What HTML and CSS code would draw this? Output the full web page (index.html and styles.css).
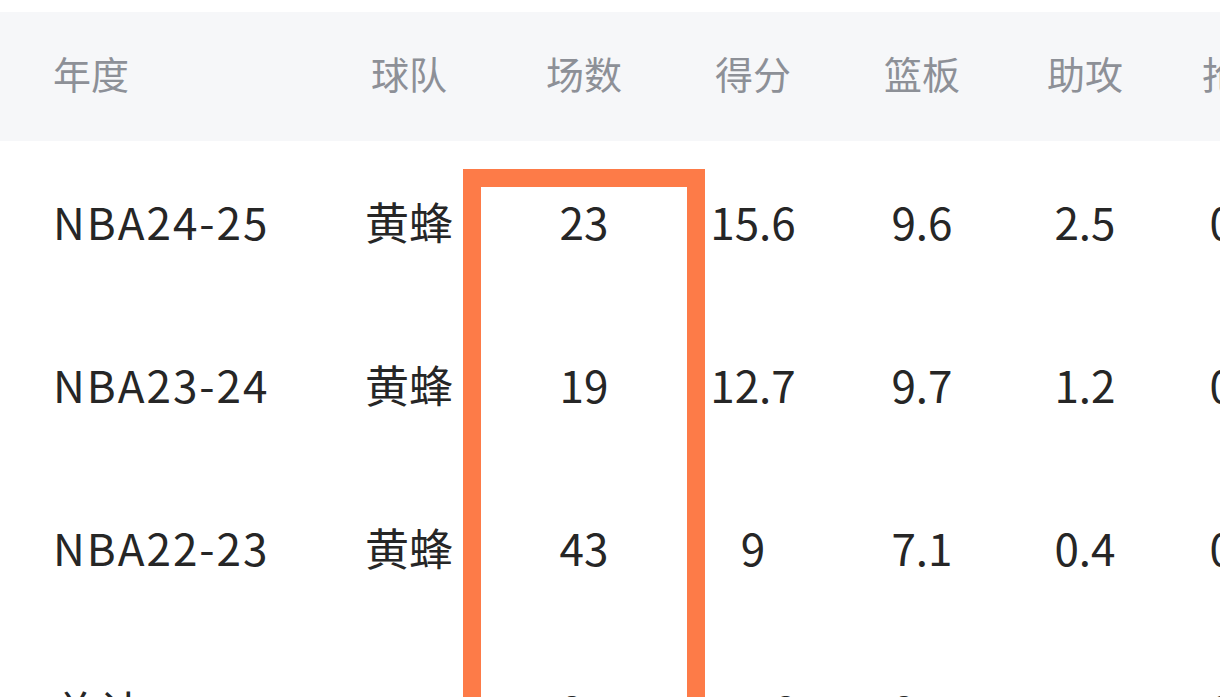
FILE: index.html
```html
<!DOCTYPE html>
<html lang="zh-CN">
<head>
<meta charset="utf-8">
<link rel="stylesheet" href="styles.css">
</head>
<body>
<div class="page">
  <div class="stats">
    <div class="row head">
      <div class="cell first">年度</div>
      <div class="cell">球队</div>
      <div class="cell">场数</div>
      <div class="cell">得分</div>
      <div class="cell">篮板</div>
      <div class="cell">助攻</div>
      <div class="cell">抢断</div>
    </div>
    <div class="body">
      <div class="row">
        <div class="cell first">NBA24-25</div>
        <div class="cell">黄蜂</div>
        <div class="cell">23</div>
        <div class="cell">15.6</div>
        <div class="cell">9.6</div>
        <div class="cell">2.5</div>
        <div class="cell">0.6</div>
      </div>
      <div class="row">
        <div class="cell first">NBA23-24</div>
        <div class="cell">黄蜂</div>
        <div class="cell">19</div>
        <div class="cell">12.7</div>
        <div class="cell">9.7</div>
        <div class="cell">1.2</div>
        <div class="cell">0.8</div>
      </div>
      <div class="row">
        <div class="cell first">NBA22-23</div>
        <div class="cell">黄蜂</div>
        <div class="cell">43</div>
        <div class="cell">9</div>
        <div class="cell">7.1</div>
        <div class="cell">0.4</div>
        <div class="cell">0.4</div>
      </div>
      <div class="row">
        <div class="cell first">总计</div>
        <div class="cell"></div>
        <div class="cell">85</div>
        <div class="cell">11.6</div>
        <div class="cell">8.5</div>
        <div class="cell">1.1</div>
        <div class="cell">0.5</div>
      </div>
    </div>
    <div class="highlight"></div>
  </div>
</div>
</body>
</html>
```
FILE: styles.css
```css
html, body {
  margin: 0;
  padding: 0;
  background: #ffffff;
}
body {
  width: 1220px;
  height: 697px;
  overflow: hidden;
  font-family: "Noto Sans CJK SC", "Noto Sans", sans-serif;
}
.page {
  padding-top: 12px;
}
.stats {
  position: relative;
  width: 1320px;
}
.row {
  box-sizing: border-box;
  display: grid;
  grid-template-columns: 322px 174px 176px 162px 176px 150px 160px;
  align-items: center;
  height: 163px;
  padding-bottom: 8px;
  font-size: 44px;
  color: #262626;
}
.head {
  height: 129px;
  background: #f6f7f9;
  font-size: 38px;
  color: #8d9097;
}
.body {
  padding-top: 2px;
}
.cell {
  text-align: center;
  white-space: nowrap;
}
.cell.first {
  text-align: left;
  padding-left: 53px;
}
.body .cell.first {
  letter-spacing: 2px;
}
.highlight {
  position: absolute;
  left: 463px;
  top: 157px;
  width: 206px;
  height: 700px;
  border: 18px solid #fd7b48;
}
```
